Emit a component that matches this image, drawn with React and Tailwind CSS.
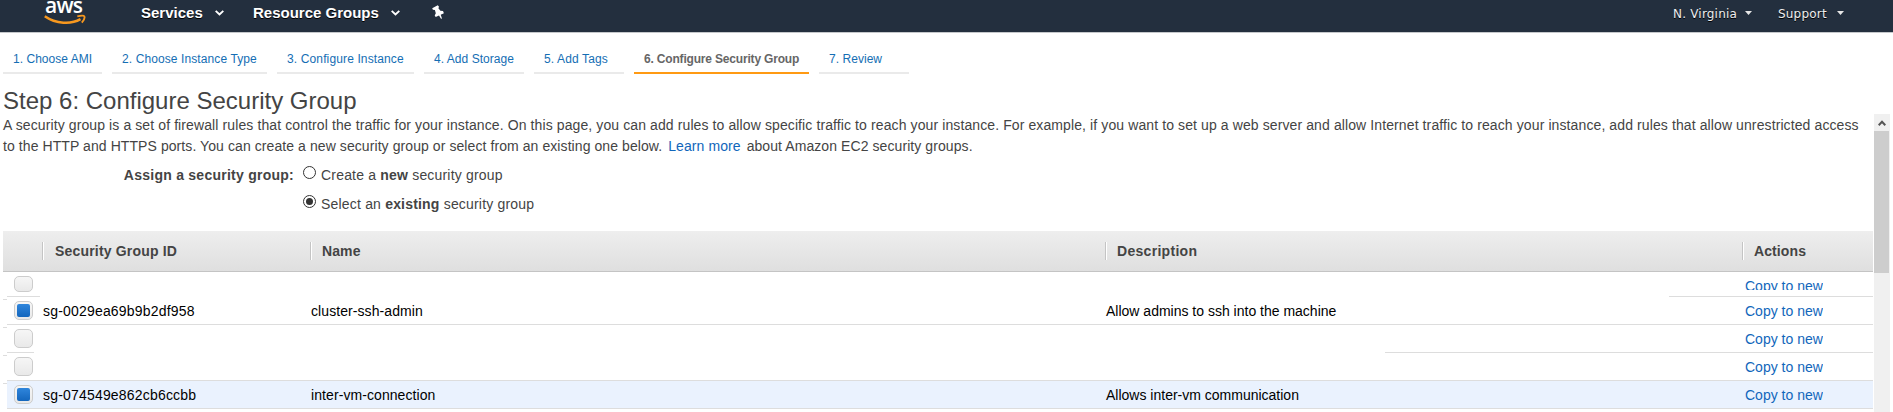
const tabs = [
  { label: '1. Choose AMI', width: 'w-[99px]', tracking: 'tracking-[0.03px]' },
  { label: '2. Choose Instance Type', width: 'w-[155px]', tracking: 'tracking-[0.1px]' },
  { label: '3. Configure Instance', width: 'w-[137px]', tracking: 'tracking-[0.13px]' },
  { label: '4. Add Storage', width: 'w-[100px]', tracking: 'tracking-[0.04px]' },
  { label: '5. Add Tags', width: 'w-[90px]', tracking: 'tracking-[0.13px]' },
  { label: '6. Configure Security Group', width: 'w-[175px]', tracking: 'tracking-[-0.18px]', active: true },
  { label: '7. Review', width: 'w-[90px]', tracking: 'tracking-[0.04px]' },
];

const columns = [
  { label: 'Security Group ID', width: 'w-[268px]', tracking: 'tracking-[0.18px]', gap: 'mr-[11px]' },
  { label: 'Name', width: 'w-[795px]', tracking: 'tracking-[0.1px]', gap: 'mr-[10px]' },
  { label: 'Description', width: 'w-[637px]', tracking: 'tracking-[0.3px]', gap: 'mr-[10px]' },
  { label: 'Actions', width: 'w-[131px]', tracking: 'tracking-[0.1px]', gap: 'mr-[10px]' },
];

const rows = [
  { height: 'h-[25px]', clipped: true, lineStart: 'w-[33px]', lineEnd: 'w-[204px]' },
  { height: 'h-7', checked: true, id: 'sg-0029ea69b9b2df958', name: 'cluster-ssh-admin', description: 'Allow admins to ssh into the machine', lineStart: 'w-full' },
  { height: 'h-7', lineStart: 'w-[27px]', lineEnd: 'w-[488px]' },
  { height: 'h-7', lineStart: 'w-full' },
  { height: 'h-7', checked: true, selected: true, id: 'sg-074549e862cb6ccbb', name: 'inter-vm-connection', description: 'Allows inter-vm communication', lineStart: 'w-full' },
];

function Chevron() {
  return (
    <svg className="h-[6px] w-[9px]" viewBox="0 0 9 6" fill="none" stroke="#fff" strokeWidth="1.9">
      <path d="M.7 .9 4.5 4.5 8.3 .9" />
    </svg>
  );
}

function Caret() {
  return (
    <svg className="h-1 w-[7px]" viewBox="0 0 7 4" fill="#e6e6e6">
      <path d="M0 0h7L3.5 4z" />
    </svg>
  );
}

function AwsLogo() {
  return (
    <svg className="h-[25px] w-[42px]" viewBox="0 0 42 25" fill="none" stroke="#f7981f">
      <text x="1" y="12.5" fill="#fff" stroke="none" fontFamily="Open Sans" fontSize="21" fontWeight="600" textLength="38">aws</text>
      <path d="M.8 16.2C12 24 27 24.6 36.5 19.2" strokeWidth="2.5" />
      <path d="M33.3 16.4C37 15.4 40 15.5 40.4 16.5C40.8 17.7 39.8 20.5 37.8 22.6" strokeWidth="1.9" />
    </svg>
  );
}

function Header() {
  return (
    <header className="flex h-[33px] border-b border-[#c5c8cb] bg-[#232f3e] text-white">
      <div className="w-[141px] pl-11"><AwsLogo /></div>
      <div className="flex h-[26px] w-[112px] items-center">
        <span className="w-[74px] shrink-0 text-[15px] font-bold [text-shadow:0_1px_0_#000]">Services</span>
        <Chevron />
      </div>
      <div className="flex h-[26px] w-[179px] items-center">
        <span className="w-[138px] text-[15px] font-bold [text-shadow:0_1px_0_#000]">Resource Groups</span>
        <Chevron />
      </div>
      <svg className="mt-[5px] h-[14px] w-3" viewBox="0 0 12 14" fill="#fff">
        <path d="M.2 3.2 5.8 .2 7 1.8 6.4 3.2 8.4 5.8 11 6 11.9 8.2 8.7 9.7 10 13.6 9 13.7 7 10.6 3.7 12 2.7 10.4 3.8 8.2 2.9 5 .9 4.7z" />
      </svg>
      <div className="flex h-[26px] flex-1 items-center justify-end pr-[49px] font-['DejaVu_Sans'] text-[12px] tracking-[0.2px] text-[#eee] [text-shadow:0_1px_0_#000]">
        <span className="w-[72px] pt-px">N. Virginia</span>
        <Caret />
        <span className="ml-[26px] w-[59px] pt-px">Support</span>
        <Caret />
      </div>
    </header>
  );
}

function Tabs() {
  return (
    <nav className="flex gap-[10px] pt-[14px] pl-[3px]">
      {tabs.map((t) => (
        <a key={t.label} className={`${t.width} ${t.tracking} h-[27px] shrink-0 border-b-2 pl-[10px] text-[12px] leading-[24px] whitespace-nowrap ${t.active ? 'border-[#ff9a13] font-bold text-[#666]' : 'border-[#eaeaea] text-[#146eb4]'}`}>
          {t.label}
        </a>
      ))}
    </nav>
  );
}

function Radio({ checked }) {
  return (
    <span className="mt-px mr-[5px] flex size-[13px] shrink-0 items-center justify-center rounded-full border border-[#333] bg-white">
      {checked && <span className="size-[7px] rounded-full bg-[#333]" />}
    </span>
  );
}

function Checkbox({ checked, clipped }) {
  return (
    <span className={`mt-1 flex w-[19px] shrink-0 items-center justify-center rounded-[5px] border border-[#ccc] bg-linear-to-b from-[#f6f6f6] to-[#e9e9e9] ${clipped ? 'h-4' : 'h-[19px]'}`}>
      {checked && <span className="size-[13px] rounded-[2px] bg-linear-to-b from-[#2f86dc] to-[#1366bd]" />}
    </span>
  );
}

function Row({ row }) {
  return (
    <div className={`${row.height} flex flex-col ${row.selected ? 'bg-[#eaf2fe]' : ''}`}>
      <div className="flex min-h-0 flex-1 text-[14px] leading-[29px] text-black">
        <div className="flex w-9 shrink-0 items-start pl-[7px]"><Checkbox checked={row.checked} clipped={row.clipped} /></div>
        <div className="w-[268px] shrink-0 tracking-[0.19px]">{row.id}</div>
        <div className="w-[795px] shrink-0 tracking-[0.08px]">{row.name}</div>
        <div className="w-[639px] shrink-0">{row.description}</div>
        <div className={`overflow-hidden text-[#1166bb] ${row.clipped ? 'h-[18px]' : ''}`}>Copy to new</div>
      </div>
      <div className="flex h-px shrink-0 justify-between">
        <span className={`${row.lineStart} bg-[#ddd]`} />
        {row.lineEnd && <span className={`${row.lineEnd} bg-[#ddd]`} />}
      </div>
    </div>
  );
}

function Table() {
  return (
    <section className="pl-[3px]">
      <div className="flex h-[41px] w-[1870px] items-center border-b border-[#c4c4c4] bg-linear-to-b from-[#eee] to-[#dfdfdf] pl-[39px]">
        {columns.map((c) => (
          <div key={c.label} className={`${c.width} ${c.tracking} flex h-[18px] shrink-0 items-center text-[14px] font-bold text-[#444]`}>
            <span className={`${c.gap} h-[18px] w-[2px] border-l border-[#c4c4c4] bg-white`} />
            {c.label}
          </div>
        ))}
      </div>
      <div className="flex">
        <div className="w-1 pt-[27px]">
          <div className="h-px bg-[#ddd]" />
          {[1, 2, 3].map((i) => <div key={i} className="h-7 border-b border-[#ddd]" />)}
        </div>
        <div className="w-[1866px]">{rows.map((r, i) => <Row key={i} row={r} />)}</div>
      </div>
    </section>
  );
}

export default function App() {
  return (
    <div className="h-[412px] w-[1893px] overflow-hidden bg-white font-['Liberation_Sans',sans-serif] text-[#444]">
      <Header />
      <Tabs />
      <h1 className="mt-[14px] h-[26px] pl-[3px] text-[24px] leading-[26px]">Step 6: Configure Security Group</h1>
      <div className="flex">
        <main className="w-[1874px] shrink-0">
          <div className="h-[41px] pt-px pl-[3px] text-[14px] leading-[21px] tracking-[0.105px] whitespace-nowrap">
            <p>A security group is a set of firewall rules that control the traffic for your instance. On this page, you can add rules to allow specific traffic to reach your instance. For example, if you want to set up a web server and allow Internet traffic to reach your instance, add rules that allow unrestricted access</p>
            <p className="tracking-[0.08px]">to the HTTP and HTTPS ports. You can create a new security group or select from an existing one below. <a className="ml-[2px] text-[#1166bb]">Learn more</a><span className="ml-[6px]">about Amazon EC2 security groups.</span></p>
          </div>
          <div className="flex h-[76px] pt-[10px] text-[14px] leading-[20px]">
            <div className="w-[303px] pr-[9px] text-right font-bold tracking-[0.25px]">Assign a security group:</div>
            <div className="flex flex-col gap-[9px] tracking-[0.19px]">
              <label className="flex items-start"><Radio /><span>Create a <b>new</b> security group</span></label>
              <label className="flex items-start"><Radio checked /><span>Select an <b>existing</b> security group</span></label>
            </div>
          </div>
          <Table />
        </main>
        <aside className="flex h-[298px] w-4 flex-col bg-[#f0f0f0] pr-px">
          <div className="flex h-[17px] items-center justify-center">
            <svg className="h-[6px] w-2" viewBox="0 0 8 6" fill="none" stroke="#555" strokeWidth="2"><path d="M.7 5.2 4 1.7 7.3 5.2" /></svg>
          </div>
          <div className="h-[142px] bg-[#cdcdcd]" />
        </aside>
      </div>
    </div>
  );
}
